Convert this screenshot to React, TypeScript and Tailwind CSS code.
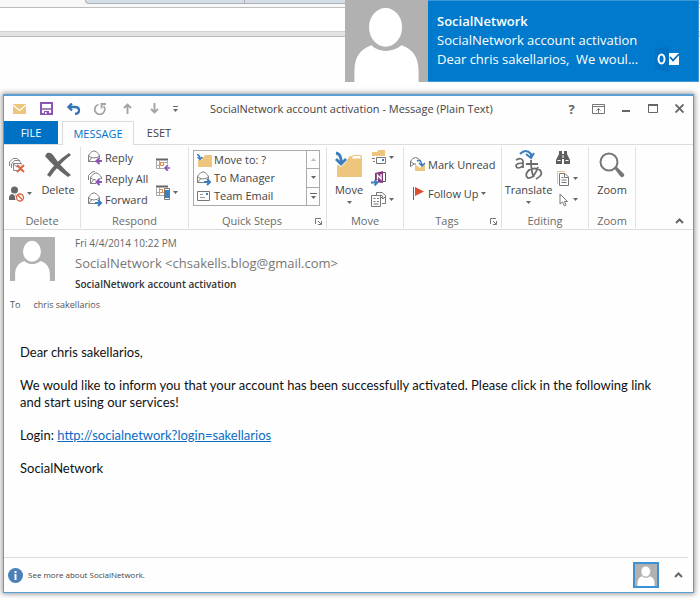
import type { ReactNode } from "react";

const UI = "font-['Open_Sans','Noto_Sans',sans-serif]";

type IconProps = { w: number; h: number; children: ReactNode; className?: string };

function Svg({ w, h, children, className = "" }: IconProps) {
  return (
    <svg width={w} height={h} viewBox={`0 0 ${w} ${h}`} fill="none" aria-hidden="true" className={`block shrink-0 ${className}`}>
      {children}
    </svg>
  );
}

function Person({ className }: { className: string }) {
  return (
    <svg viewBox="0 0 44 44" preserveAspectRatio="xMidYMax slice" aria-hidden="true" className={`block shrink-0 bg-[#b1b1b1] ${className}`}>
      <path d="M5 44.500V38C5 31 8 26.500 14 24.500C18 28.500 25 28.500 30 24.500C36 26.500 39 31 39 38V44.500Z" fill="#fff" />
      <ellipse cx="21.500" cy="15" rx="9.500" ry="11" fill="#fff" stroke="#b1b1b1" strokeWidth="1.500" />
    </svg>
  );
}

function Caret({ className = "" }: { className?: string }) {
  return (
    <Svg w={5} h={3} className={className}>
      <path d="M0 0h5L2.500 3z" fill="#666" />
    </Svg>
  );
}

function Envelope() {
  return (
    <g stroke="#808080" strokeWidth="1">
      <path d="M.5 5.500Q1 4 3.500 2Q6 -.5 8.500 2Q11 4 11.500 5.500V11.500H.5Z" fill="#fff" />
      <path d="M.5 5.500Q2.500 8 6 8Q9.500 8 11.500 5.500M.5 11.500L3.500 8M11.500 11.500L8.500 8" />
    </g>
  );
}

const ArrowLeft = () => <path d="M14 11H9.500M11.500 8L8.500 11L11.500 14" stroke="#8a55b5" strokeWidth="2" />;
const ArrowRight = () => <path d="M7 11H12M10 8L13 11L10 14" stroke="#3c7dbd" strokeWidth="2" />;

function ReplyIcon() {
  return <Svg w={15} h={15}><Envelope /><path d="M8 8h7v7H8z" fill="#fff" /><ArrowLeft /></Svg>;
}
function ReplyAllIcon() {
  return (
    <Svg w={15} h={15}>
      <path d="M.5 9V4.500L3 2Q5 0 7 .5" stroke="#808080" />
      <g transform="translate(2 1)"><Envelope /></g>
      <path d="M8 8h7v7H8z" fill="#fff" /><ArrowLeft />
    </Svg>
  );
}
function ForwardIcon() {
  return <Svg w={15} h={15}><Envelope /><path d="M7 8h8v7H7z" fill="#fff" /><ArrowRight /></Svg>;
}

function CleanupIcon() {
  return (
    <Svg w={16} h={16}>
      <path d="M.5 9V5L4 1.500H8L11 4M2.500 11V7L5.500 3.500H10L12 6" stroke="#888" />
      <path d="M4.500 6.500h8v7h-8z" stroke="#888" fill="#fff" />
      <path d="M4.500 7l4 3.500 4-3.500" stroke="#888" />
      <path d="M8 7h8v9H8z" fill="#fff" opacity=".7" />
      <path d="M8 8L15 15M15 8L8 15" stroke="#dd6540" strokeWidth="2" />
    </Svg>
  );
}
function JunkIcon() {
  return (
    <Svg w={16} h={16}>
      <circle cx="5.500" cy="4" r="3.500" fill="#666" />
      <path d="M0 14V11Q1 8 4 8L5.500 10L7 8Q10 8 11 11V14Z" fill="#666" />
      <circle cx="11" cy="11.500" r="5" fill="#fff" />
      <circle cx="11" cy="11.500" r="3.500" stroke="#dd6540" strokeWidth="1.300" />
      <path d="M8.500 9L13.500 14" stroke="#dd6540" strokeWidth="1.300" />
    </Svg>
  );
}
function DeleteIcon() {
  return (
    <Svg w={27} h={26}>
      <path d="M2 1Q6 0 8 3Q16 15 26 23L23 25Q10 16 0 4Z" fill="#666" />
      <path d="M26 3Q14 12 5 25L2 23Q10 10 24 1Z" fill="#666" />
    </Svg>
  );
}
function MeetingIcon() {
  return (
    <Svg w={15} h={13}>
      <path d="M0 1.500h12" stroke="#666" strokeWidth="2" />
      <path d="M.5 2v8.500H8M11.500 2v4M1 7.500h3M4 4.500h2M8 4.500h4M3.500 2v9" stroke="#aaa" />
      <path d="M4.500 4.500h3v3h-3z" stroke="#e8883c" fill="#fff" />
      <path d="M14 10H9.500M12 7L9 10L12 13" stroke="#8a55b5" strokeWidth="1.700" />
    </Svg>
  );
}
function IMIcon() {
  return (
    <Svg w={15} h={15}>
      <path d="M0 1.500h12" stroke="#666" strokeWidth="2" />
      <path d="M.5 2v8.500H8M.5 7.500H8M3.500 2v9" stroke="#aaa" />
      <path d="M3.500 4.500h3v3h-3z" stroke="#e8883c" fill="#fff" />
      <path d="M8.500 3.500h5v11h-5z" stroke="#777" fill="#fff" />
      <path d="M9 5h4v8h-4z" fill="#3c7dbd" />
    </Svg>
  );
}

function MoveToIcon() {
  return (
    <Svg w={15} h={13}>
      <path d="M1 4H6L8 1H15V13H1Z" fill="#edc57c" />
      <path d="M0 0h5v6H0z" fill="#fff" />
      <path d="M0 .5Q3 1 3 5M.5 3L3 5.500L5.500 3" stroke="#3c7dbd" strokeWidth="1.500" />
    </Svg>
  );
}
function TeamIcon() {
  return (
    <Svg w={15} h={11}>
      <path d="M.5 .5h12v9h-12z" stroke="#777" />
      <path d="M3 3.500h3M3 6.500h5" stroke="#999" />
      <path d="M9 3h2" stroke="#3c7dbd" strokeWidth="2" />
    </Svg>
  );
}
function BigMoveIcon() {
  return (
    <Svg w={28} h={27}>
      <path d="M2 26V11H10L15 5H27V26Z" fill="#edc57c" />
      <path d="M16 8L18 4.500H26V8Z" fill="#fff" stroke="#edc57c" />
      <path d="M0 0h12v10L6 16L0 12Z" fill="#fff" />
      <path d="M1 2Q7 3 6 13M1 8L6 13L11 8" stroke="#3c7dbd" strokeWidth="2.800" />
    </Svg>
  );
}
function RulesIcon() {
  return (
    <Svg w={16} h={15}>
      <path d="M1 2H6L7 0H14V6H1Z" fill="#edc57c" />
      <path d="M5.500 7.500h9v6h-9z" stroke="#777" fill="#fff" />
      <path d="M1 8.500h3M2 11.500h2" stroke="#777" />
      <path d="M11 10h2" stroke="#3c7dbd" strokeWidth="2" />
    </Svg>
  );
}
function OneNoteIcon() {
  return (
    <Svg w={16} h={15}>
      <path d="M4 2L12 0V12L4 11Z" fill="#80397b" />
      <path d="M12 1.500h2.500v9H12" stroke="#80397b" />
      <path d="M6.500 8.500V4L10 8V3" stroke="#fff" strokeWidth="1.300" />
      <path d="M0 9h7l-1 6H0z" fill="#fff" />
      <path d="M0 11.500H6M3.500 9L6.500 11.500L3.500 14.500" stroke="#3c7dbd" strokeWidth="1.800" />
    </Svg>
  );
}
function ActionsIcon() {
  return (
    <Svg w={16} h={15}>
      <path d="M5.500 3V.5H11L14.500 3.500V11.500H11" stroke="#777" />
      <path d="M.5 3.500H9.500V14.500H.5Z" stroke="#777" fill="#fff" />
      <path d="M2.500 6.500h2M6 6.500h2M2.500 9.500h2M6 9.500h2M2.500 12h5" stroke="#777" />
      <path d="M9 3Q12 3 12 6M10 5L12 7L14 5" stroke="#777" />
    </Svg>
  );
}
function UnreadIcon() {
  return (
    <Svg w={16} h={15}>
      <path d="M.5 9.500V4.500Q1 3 3 1.500Q5.500 -.5 8 1.500L11 4M.5 4.500L4 7H6M.5 9.500L4 7" stroke="#777" />
      <path d="M5 7L10 11L15 7V14H5Z" fill="#edc57c" />
      <path d="M7 4Q11 2 12 8M9 6L12 9L15 6" stroke="#3c7dbd" strokeWidth="1.500" />
    </Svg>
  );
}
function FlagIcon() {
  return (
    <Svg w={11} h={13}>
      <path d="M.5 0V13" stroke="#666" />
      <path d="M2 0L11 4.500L2 9Z" fill="#dc4f2c" />
    </Svg>
  );
}
function TranslateIcon() {
  return (
    <Svg w={30} h={31}>
      <path d="M2 11Q8 8 9 12V19M9 14Q2 14 2 17Q3 21 9 17" stroke="#6b6b6b" strokeWidth="1.700" />
      <path d="M12 15H24M17 11Q17 24 20 28M24 18Q20 30 14 29Q10 26 15 21Q21 18 26 21Q30 26 22 30" stroke="#6b6b6b" strokeWidth="1.800" />
      <path d="M6 5Q12 -1 17 5V8M12 5L17 9L20 4" stroke="#3c7dbd" strokeWidth="2" />
    </Svg>
  );
}
function BinocularsIcon() {
  return (
    <Svg w={14} h={13}>
      <path d="M3 0H6V3H8V0H11V3L14 9V13H8V8H6V13H0V9L3 3Z" fill="#5f5f5f" />
      <path d="M1.500 9.500h3M9.500 9.500h3M7 4v3" stroke="#fff" />
    </Svg>
  );
}
function RelatedIcon() {
  return (
    <Svg w={12} h={15}>
      <path d="M.5 13V.5H8" stroke="#edc57c" />
      <path d="M2.500 2.500H8L11.500 6V14.500H2.500Z" stroke="#777" fill="#fff" />
      <path d="M7.500 3V6.500H11M4.500 6.500h2M4.500 9h5M4.500 11.500h5" stroke="#777" />
    </Svg>
  );
}
function CursorIcon() {
  return (
    <Svg w={9} h={14}>
      <path d="M1 1V11L3.500 9L5.500 13L7 12L5.500 8.500H8.500Z" stroke="#777" fill="#fff" />
    </Svg>
  );
}
function ZoomIcon() {
  return (
    <Svg w={26} h={26}>
      <circle cx="10" cy="10" r="8.500" stroke="#777" strokeWidth="2" />
      <path d="M15 16L17 14L25 22Q26 24 24 25Q23 26 21 24Z" fill="#777" />
    </Svg>
  );
}
function Launcher() {
  return (
    <Svg w={7} h={7}>
      <path d="M.5 6V.5H6M3 3L6 6M6.500 3V6.500H3" stroke="#777" />
    </Svg>
  );
}
function Chevron() {
  return (
    <Svg w={9} h={6}>
      <path d="M1 5L4.500 1.500L8 5" stroke="#666" strokeWidth="2" />
    </Svg>
  );
}

const quickAccess: { label: string; icon: ReactNode }[] = [
  { label: "Mail", icon: <Svg w={13} h={10}><path d="M0 0H13V10H0Z" fill="#edc57c" /><path d="M0 1L6.500 6.500L13 1" stroke="#fff" strokeWidth="1.300" /></Svg> },
  { label: "Save", icon: <Svg w={13} h={13}><path d="M1 1H12V12H1Z" stroke="#8a55b5" strokeWidth="2" /><path d="M2 7h9" stroke="#8a55b5" strokeWidth="1.500" /><path d="M4 9h5v4H4z" fill="#8a55b5" /><path d="M5 10h1.500v2H5z" fill="#fff" /></Svg> },
  { label: "Undo", icon: <Svg w={14} h={12}><path d="M5 .5L1.500 4L5 7.500M2 4H8Q12 4 12 7.500Q12 10.500 8 11" stroke="#3574b5" strokeWidth="2.300" /></Svg> },
  { label: "Redo", icon: <Svg w={13} h={12}><path d="M4.500 1.500A5 5 0 1 0 9.500 3" stroke="#a3a3a3" strokeWidth="1.800" /><path d="M7.500 5.500V1H12" stroke="#a3a3a3" strokeWidth="1.800" /></Svg> },
  { label: "Previous item", icon: <Svg w={9} h={11}><path d="M4.500 11V2M1 5L4.500 1.500L8 5" stroke="#a3a3a3" strokeWidth="1.900" /></Svg> },
  { label: "Next item", icon: <Svg w={9} h={11}><path d="M4.500 0V9M1 6L4.500 9.500L8 6" stroke="#a3a3a3" strokeWidth="1.900" /></Svg> },
];

const windowControls: { label: string; icon: ReactNode }[] = [
  { label: "Ribbon display options", icon: <Svg w={13} h={10}><path d="M.5 .5h12v9H.5zM.5 2.500h12" stroke="#777" /><path d="M6.500 9V4.500M4.500 6.500L6.500 4.500L8.500 6.500" stroke="#777" /></Svg> },
  { label: "Minimize", icon: <Svg w={8} h={8}><path d="M0 6h8" stroke="#666" strokeWidth="2" /></Svg> },
  { label: "Maximize", icon: <Svg w={10} h={9}><path d="M.5 .5h9v8h-9z" stroke="#666" /><path d="M0 1h10" stroke="#666" strokeWidth="2" /></Svg> },
  { label: "Close", icon: <Svg w={9} h={9}><path d="M.5 .5L8.500 8.500M8.500 .5L.5 8.500" stroke="#666" strokeWidth="1.900" /></Svg> },
];

function Group({ label, width, launcher, children }: { label: string; width: string; launcher?: boolean; children: ReactNode }) {
  return (
    <section aria-label={label} className={`flex shrink-0 flex-col ${width}`}>
      <div className="mb-1 mt-[2px] flex flex-1 flex-col border-r border-[#e1e1e1]">
        <div className="flex h-[67px]">{children}</div>
        <div className="flex h-[14px] items-center">
          <span className="flex-1 text-center text-[#6a6a6a]">{label}</span>
          {launcher && <button aria-label={`${label} options`} className="mr-1"><Launcher /></button>}
        </div>
      </div>
    </section>
  );
}

function RibbonRow({ icon, label, caret, h = "h-[21px]" }: { icon: ReactNode; label: string; caret?: boolean; h?: string }) {
  return (
    <button className={`flex items-center gap-[2px] whitespace-nowrap ${h}`}>
      {icon}
      <span>{label}</span>
      {caret && <Caret />}
    </button>
  );
}

function IconButton({ label, icon, caret }: { label: string; icon: ReactNode; caret?: boolean }) {
  return (
    <button aria-label={label} className="flex h-[21px] items-center gap-[2px]">
      <span className="flex w-4 justify-center">{icon}</span>
      {caret && <Caret />}
    </button>
  );
}

function BigButton({ label, icon, caret }: { label: string; icon: ReactNode; caret?: boolean }) {
  return (
    <button className="flex h-[60px] flex-col items-center text-center">
      <span className="flex h-[35px] items-center">{icon}</span>
      <span className="leading-[15px]">{label}</span>
      {caret && <Caret className="mt-1" />}
    </button>
  );
}

function Toast() {
  return (
    <aside className="absolute right-px top-0 flex h-[82px] w-[354px] border border-[#3b97da] bg-[#007acc] text-white">
      <Person className="-my-px -ml-px h-[82px] w-[83px]" />
      <div className="flex min-w-0 flex-1 flex-col whitespace-pre pl-[9px] pt-[11px] text-[13px] leading-[19px]">
        <strong className="font-semibold">SocialNetwork</strong>
        <span>SocialNetwork account activation</span>
        <span>Dear chris sakellarios,  We woul...</span>
      </div>
      <Svg w={26} h={26} className="mr-[17px] mt-[45px]">
        <path d="M0 3L14 0V26L0 23Z" fill="#0071c3" />
        <ellipse cx="6.500" cy="13" rx="3" ry="4.500" stroke="#fff" strokeWidth="2" />
        <path d="M14 7H24V19H14Z" fill="#fff" />
        <path d="M15 11L18 14.500L24 8" stroke="#0069ba" strokeWidth="1.800" />
      </Svg>
    </aside>
  );
}

export default function App() {
  return (
    <div className={`relative flex min-h-screen w-full flex-col bg-[#fefefe] text-[11px] leading-[14px] text-[#444] ${UI}`}>
      <div className="mb-[57px]">
        <div className="h-[8px] border-b border-[#bdbdbd] bg-[#f8f8f8] pl-[85px]">
          <div className="flex h-1 rounded-bl-[4px] border-b border-l border-[#aeb2b6] bg-[#d5dde6]">
            <div className="w-[159px] border-r border-[#aeb2b6]" />
          </div>
        </div>
        <div className="h-[23px] bg-white" />
        <div className="h-[6px] border-y border-t-[#d0d0d0] border-b-[#b9b9b9] bg-[#e3e3e3]" />
      </div>
      <Toast />

      <main className="mb-[5px] ml-[3px] mr-[6px] flex flex-1 flex-col border border-t-2 border-[#5a9fd4] bg-[#fefefe] shadow-[0_0_5px_1px_rgba(0,0,0,0.4)]">
        <header className="flex h-[25px] items-center pl-[2px]">
          {quickAccess.map((q) => (
            <button key={q.label} aria-label={q.label} className="flex h-full w-[27px] shrink-0 items-center justify-center">{q.icon}</button>
          ))}
          <button aria-label="Customize toolbar" className="flex h-full w-[14px] shrink-0 items-center justify-center">
            <Svg w={5} h={6}><path d="M0 .5h5" stroke="#666" /><path d="M0 3h5L2.500 6z" fill="#666" /></Svg>
          </button>
          <h1 className="min-w-0 flex-1 truncate pl-7">SocialNetwork account activation - Message (Plain Text)</h1>
          <button aria-label="Help" className="w-[27px] shrink-0 text-[13px] font-bold text-[#666]">?</button>
          {windowControls.map((c) => (
            <button key={c.label} aria-label={c.label} className="flex h-full w-[27px] shrink-0 items-center justify-center">{c.icon}</button>
          ))}
        </header>

        <nav className="flex h-[24px] border-b border-[#dcdcdc]">
          <button className="w-[54px] bg-[#0072c6] text-white">FILE</button>
          <button className="-mb-px ml-1 w-[72px] border border-b-0 border-[#dcdcdc] bg-[#fefefe] text-[#0072c6]">MESSAGE</button>
          <button className="w-[50px]">ESET</button>
        </nav>

        <div className="flex h-[85px] shrink-0 border-b border-[#dcdcdc]">
          <Group label="Delete" width="w-[77px]">
            <div className="flex w-[32px] flex-col gap-2 pl-[5px] pt-[7px]">
              <IconButton label="Clean up" icon={<CleanupIcon />} />
              <IconButton label="Junk" icon={<JunkIcon />} caret />
            </div>
            <div className="flex flex-1 justify-center"><BigButton label="Delete" icon={<DeleteIcon />} /></div>
          </Group>
          <Group label="Respond" width="w-[108px]">
            <div className="flex flex-1 flex-col pl-[7px]">
              <RibbonRow icon={<ReplyIcon />} label="Reply" />
              <RibbonRow icon={<ReplyAllIcon />} label="Reply All" />
              <RibbonRow icon={<ForwardIcon />} label="Forward" />
            </div>
            <div className="flex w-[33px] flex-col gap-[7px] pt-[7px]">
              <IconButton label="Meeting" icon={<MeetingIcon />} />
              <IconButton label="More respond actions" icon={<IMIcon />} caret />
            </div>
          </Group>
          <Group label="Quick Steps" width="w-[138px]" launcher>
            <div className="mx-1 mt-[3px] flex h-[56px] w-[127px] border border-[#ababab]">
              <div className="flex flex-1 flex-col pl-[3px]">
                <RibbonRow icon={<MoveToIcon />} label="Move to: ?" h="h-[18px]" />
                <RibbonRow icon={<ForwardIcon />} label="To Manager" h="h-[18px]" />
                <RibbonRow icon={<TeamIcon />} label="Team Email" h="h-[18px]" />
              </div>
              <div className="flex w-[13px] flex-col divide-y divide-[#ababab] border-l border-[#ababab]">
                <button aria-label="Scroll up" className="flex flex-1 items-center justify-center"><Svg w={5} h={3}><path d="M0 3h5L2.500 0z" fill="#bbb" /></Svg></button>
                <button aria-label="Scroll down" className="flex flex-1 items-center justify-center"><Caret /></button>
                <button aria-label="More quick steps" className="flex flex-1 items-center justify-center"><Svg w={7} h={6}><path d="M0 .5h7" stroke="#666" /><path d="M1 3h5L3.500 6z" fill="#666" /></Svg></button>
              </div>
            </div>
          </Group>
          <Group label="Move" width="w-[77px]">
            <div className="flex w-[44px] justify-center"><BigButton label="Move" icon={<BigMoveIcon />} caret /></div>
            <div className="flex flex-col">
              <IconButton label="Rules" icon={<RulesIcon />} caret />
              <IconButton label="OneNote" icon={<OneNoteIcon />} />
              <IconButton label="Actions" icon={<ActionsIcon />} caret />
            </div>
          </Group>
          <Group label="Tags" width="w-[98px]" launcher>
            <div className="flex flex-col gap-2 pl-[6px] pt-[7px]">
              <RibbonRow icon={<UnreadIcon />} label="Mark Unread" />
              <RibbonRow icon={<span className="flex w-4 justify-center"><FlagIcon /></span>} label="Follow Up" caret />
            </div>
          </Group>
          <Group label="Editing" width="w-[87px]">
            <div className="flex w-[53px] justify-center"><BigButton label="Translate" icon={<TranslateIcon />} caret /></div>
            <div className="flex flex-col">
              <IconButton label="Find" icon={<BinocularsIcon />} />
              <IconButton label="Related" icon={<RelatedIcon />} caret />
              <IconButton label="Select" icon={<CursorIcon />} caret />
            </div>
          </Group>
          <Group label="Zoom" width="w-[47px]">
            <div className="flex flex-1 justify-center"><BigButton label="Zoom" icon={<ZoomIcon />} /></div>
          </Group>
          <button aria-label="Collapse the ribbon" className="mb-[5px] ml-auto mr-[9px] self-end"><Chevron /></button>
        </div>

        <section className="px-[6px] pt-[7px]">
          <div className="flex gap-5">
            <Person className="h-[44px] w-[45px]" />
            <div className="flex flex-col text-[#666]">
              <time className="text-[10px] leading-[13px]">Fri 4/4/2014 10:22 PM</time>
              <span className="text-[13px] leading-[26px] text-[#777]">SocialNetwork &lt;chsakells.blog@gmail.com&gt;</span>
              <h2 className="text-[10px] font-semibold leading-[16px] text-[#333]">SocialNetwork account activation</h2>
            </div>
          </div>
          <div className="mt-[6px] flex gap-[13px] text-[9px] text-[#555]">
            <span>To</span>
            <span>chris sakellarios</span>
          </div>
        </section>

        <article className="flex flex-1 flex-col gap-4 px-4 pt-[32px] font-['Lato','Open_Sans',sans-serif] text-[13px] leading-[17px] text-[#111]">
          <p>Dear chris sakellarios,</p>
          <p className="max-w-[640px]">We would like to inform you that your account has been successfully activated. Please click in the following link and start using our services!</p>
          <p>Login: <a href="#login" className="text-[#0b6cc4] underline">http://socialnetwork?login=sakellarios</a></p>
          <p>SocialNetwork</p>
        </article>

        <footer className="mr-[5px] flex h-[35px] items-center border-t border-[#dcdcdc] pl-1">
          <Svg w={15} h={15}>
            <circle cx="7.500" cy="7.500" r="7.500" fill="#4a7fb8" />
            <path d="M6.500 6h2v6h-2zM6.500 3h2v2h-2z" fill="#fff" />
          </Svg>
          <span className="pl-[5px] text-[8px]">See more about SocialNetwork.</span>
          <button aria-label="Contact" className="ml-auto border-2 border-[#3d92d4]"><Person className="h-[22px] w-[22px]" /></button>
          <button aria-label="Expand people pane" className="ml-[15px] mr-[5px]"><Chevron /></button>
        </footer>
      </main>
    </div>
  );
}
